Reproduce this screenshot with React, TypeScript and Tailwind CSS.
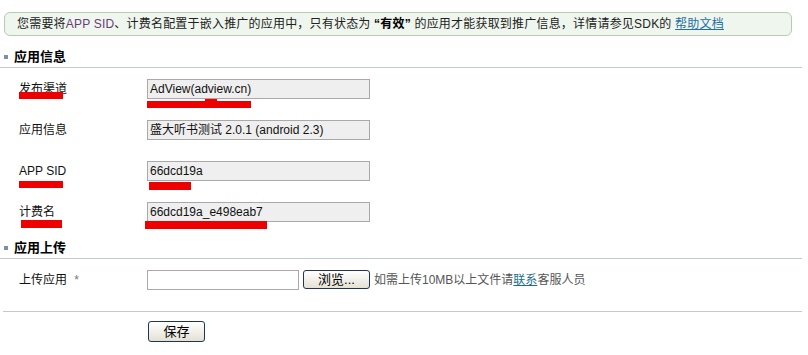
const font = { fontFamily: '"Liberation Sans", "Noto Sans CJK SC", sans-serif' };

function SectionHeader({ title }: { title: string }) {
  return (
    <div className="mr-[6px] flex h-[27px] items-end border-b border-[#c3c9d1] pb-[1px]">
      <span className="ml-1 mr-[6px] mb-[7px] h-[4px] w-[4px] bg-[#7d8ea6]" />
      <span className="text-[13px] font-bold leading-[18px] text-black">{title}</span>
    </div>
  );
}

function FieldRow({ label, value }: { label: string; value: string }) {
  return (
    <div className="flex h-[41px] pt-[11px]">
      <div className="w-[147px] shrink-0 pl-[19px] text-[12px] leading-[20px] text-[#111]">{label}</div>
      <div className="h-[20px] w-[223px] border border-[#a9a9a9] bg-[#efefef] pl-[2px] text-[12px] leading-[18px] text-[#111]">
        {value}
      </div>
    </div>
  );
}

function XpButton({ children, className }: { children: React.ReactNode; className: string }) {
  return (
    <button
      className={`flex items-center justify-center rounded-[3px] border border-[#1f3553] bg-gradient-to-b from-white to-[#e4e1d4] text-[13px] leading-none text-black ${className}`}
    >
      {children}
    </button>
  );
}

export default function App() {
  return (
    <div className="relative w-[808px] bg-white pt-3 pb-4" style={font}>
      <div className="ml-1 mr-4 h-[24px] rounded-[6px] border border-[#b7cab4] bg-[#eef6ed] pl-3 text-[12px] leading-[22px] tracking-[0.2px] text-[#222]">
        您需要将<span className="text-[#6a3d78]">APP SID</span>、计费名配置于嵌入推广的应用中，只有状态为{" "}
        <span className="font-bold text-black">“有效”</span> 的应用才能获取到推广信息，详情请参见SDK的{" "}
        <a className="text-[#1f6fa6] underline">帮助文档</a>
      </div>

      <div className="mt-[5px]">
        <SectionHeader title="应用信息" />
      </div>
      <FieldRow label="发布渠道" value="AdView(adview.cn)" />
      <FieldRow label="应用信息" value="盛大听书测试  2.0.1 (android 2.3)" />
      <FieldRow label="APP SID" value="66dcd19a" />
      <FieldRow label="计费名" value="66dcd19a_e498eab7" />

      <SectionHeader title="应用上传" />
      <div className="flex h-[41px] items-start pt-[11px]">
        <div className="w-[147px] shrink-0 pl-[19px] text-[12px] leading-[20px] text-[#111]">
          上传应用 <span className="ml-1 text-[#777]">*</span>
        </div>
        <div className="h-[20px] w-[152px] border border-[#a9a9a9] bg-white" />
        <XpButton className="ml-[4px] h-[19px] w-[67px]">浏览...</XpButton>
        <span className="ml-[4px] text-[12px] leading-[20px] text-[#555]">
          如需上传10MB以上文件请<a className="text-[#1b6f8c] underline">联系</a>客服人员
        </span>
      </div>

      <div className="mt-[11px] ml-[3px] mr-[6px] flex border-t border-[#c3c9d1] pt-[9px] pl-[145px]">
        <XpButton className="h-[21px] w-[57px]">保存</XpButton>
      </div>

      {/* red redaction marks */}
      <div className="absolute left-[19px] top-[92px] h-[7px] w-[44px] bg-[#ee0000]" />
      <div className="absolute left-[147px] top-[101px] h-[7px] w-[104px] bg-[#ee0000]" />
      <div className="absolute left-[205px] top-[99px] h-[3px] w-[12px] bg-[#ee0000]" />
      <div className="absolute left-[19px] top-[181px] h-[7px] w-[44px] bg-[#ee0000]" />
      <div className="absolute left-[149px] top-[182px] h-[8px] w-[42px] bg-[#ee0000]" />
      <div className="absolute left-[21px] top-[220px] h-[8px] w-[41px] bg-[#ee0000]" />
      <div className="absolute left-[145px] top-[221px] h-[8px] w-[122px] bg-[#ee0000]" />
    </div>
  );
}
